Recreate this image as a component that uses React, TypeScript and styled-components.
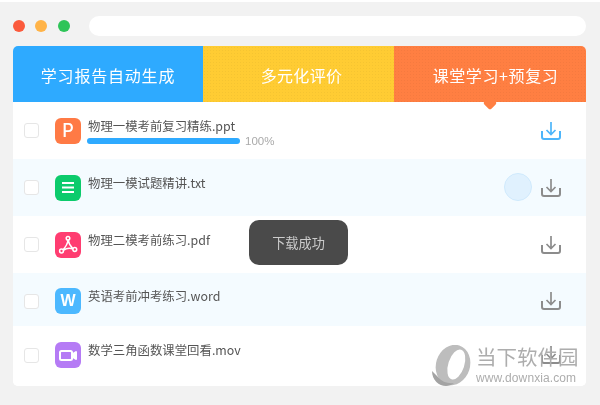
import React from "react";
import styled, { createGlobalStyle } from "styled-components";

const Global = createGlobalStyle`
  html, body { margin: 0; padding: 0; background: #fff; }
  * { box-sizing: border-box; }
`;

const Page = styled.div`
  width: 600px;
  height: 405px;
  overflow: hidden;
  border-top: 2px solid #fff;
  background: #f2f2f2;
  padding: 14px 14px 0 13px;
  font-family: "Noto Sans CJK SC", "Noto Sans", sans-serif;
  filter: blur(0.35px);
`;

const TitleBar = styled.div`
  display: flex;
  align-items: center;
  height: 20px;
`;

const Light = styled.span<{ $color: string; $gap: number }>`
  width: 12px;
  height: 12px;
  border-radius: 50%;
  background: ${(p) => p.$color};
  margin-right: ${(p) => p.$gap}px;
`;

const AddressBar = styled.div`
  flex: 1;
  height: 20px;
  border-radius: 10px;
  background: #fff;
`;

const Card = styled.div`
  position: relative;
  margin-top: 10px;
  height: 340px;
  background: #fff;
  border-radius: 5px;
  overflow: hidden;
`;

const Tabs = styled.div`
  display: grid;
  grid-template-columns: 190px 191px 192px;
  height: 56px;
`;

const Tab = styled.div<{ $bg: string; $dotted?: boolean; $shift: number; $spacing: number }>`
  display: flex;
  align-items: center;
  justify-content: center;
  padding: 2px 0 0 ${(p) => p.$shift}px;
  color: #fff;
  background-color: ${(p) => p.$bg};
  background-image: ${(p) =>
    p.$dotted ? "radial-gradient(rgba(0,0,0,0.04) 0.8px, transparent 1px)" : "none"};
  background-size: 3px 3px;
  font-size: 16px;
  letter-spacing: ${(p) => p.$spacing}px;
`;

const Pointer = styled.span`
  position: absolute;
  z-index: 1;
  left: 472px;
  top: 52px;
  width: 10px;
  height: 10px;
  background: #ff7f42;
  border-radius: 2px;
  transform: rotate(45deg);
`;

const Row = styled.div<{ $h: number; $tint?: boolean; $top?: number; $bottom?: number }>`
  position: relative;
  display: flex;
  align-items: center;
  height: ${(p) => p.$h}px;
  padding: ${(p) => p.$top ?? 0}px 25px ${(p) => p.$bottom ?? 0}px 11px;
  background: ${(p) => (p.$tint ? "#f4fbff" : "#fff")};
`;

const Check = styled.span`
  width: 15px;
  height: 15px;
  flex: none;
  border: 1.5px solid #e6e6e6;
  border-radius: 3px;
  background: #fff;
  margin-right: 16px;
`;

const FileIcon = styled.span<{ $bg: string }>`
  width: 26px;
  height: 26px;
  flex: none;
  display: flex;
  align-items: center;
  justify-content: center;
  border-radius: 6px;
  background: ${(p) => p.$bg};
  color: #fff;
  font-family: "Inter", "Liberation Sans", sans-serif;
  font-weight: 500;
  font-size: 18px;
  margin-right: 7px;
`;

const BoldLetter = styled.span`
  font-family: "Liberation Sans", sans-serif;
  font-weight: 700;
  font-size: 16px;
`;

const Info = styled.div`
  height: 26px;
  display: flex;
  flex-direction: column;
  gap: 3px;
`;

const Name = styled.div`
  font-size: 12.4px;
  line-height: 18px;
  height: 18px;
  margin-top: -1px;
  color: #555;
  white-space: nowrap;
`;

const ProgressLine = styled.div`
  display: flex;
  align-items: center;
  height: 6px;
  margin-left: -1px;
`;

const Bar = styled.div`
  width: 153px;
  height: 6px;
  border-radius: 3px;
  background: #2eaaff;
`;

const Percent = styled.span`
  margin-left: 5px;
  font-family: "Liberation Sans", sans-serif;
  font-size: 11.5px;
  color: #aaa;
`;

const DownloadBtn = styled.span`
  margin-left: auto;
  display: flex;
`;

const Ripple = styled.span`
  position: absolute;
  left: 491px;
  top: 14px;
  width: 28px;
  height: 28px;
  border-radius: 50%;
  background: #e0f1fe;
  border: 1px solid #cfe9fc;
`;

const Toast = styled.div`
  position: absolute;
  left: 236px;
  top: 174px;
  width: 99px;
  height: 45px;
  display: flex;
  align-items: center;
  justify-content: center;
  border-radius: 10px;
  background: #4a4a4a;
  color: #ccc;
  font-size: 13.2px;
`;

const Watermark = styled.div`
  position: absolute;
  left: 418px;
  top: 299px;
  display: flex;
  align-items: flex-start;
  gap: 3px;
  color: #adadad;
`;

const WatermarkText = styled.div`
  display: flex;
  flex-direction: column;
  margin-top: -2px;
`;

const BrandName = styled.div`
  font-size: 20.5px;
  line-height: 26px;
  white-space: nowrap;
`;

const BrandUrl = styled.div`
  font-family: "Liberation Sans", sans-serif;
  font-size: 12px;
  line-height: 14px;
  margin-top: 2px;
  letter-spacing: 0.1px;
  white-space: nowrap;
`;

const DownloadIcon = ({ color }: { color: string }) => (
  <svg width="20" height="18" viewBox="0 0 20 18" fill="none" stroke={color} strokeWidth="1.7">
    <path d="M1 9v6a2 2 0 0 0 2 2h14a2 2 0 0 0 2-2V9" strokeWidth="2" />
    <path d="M10 0v12M5.5 8l4.5 4.5L14.5 8" />
  </svg>
);

const LinesGlyph = () => (
  <svg width="14" height="13" viewBox="0 0 14 13" stroke="#fff" strokeWidth="2">
    <path d="M1 2h12M1 6.500h12M1 11h12" />
  </svg>
);

const PdfGlyph = () => (
  <svg width="20" height="20" viewBox="0 0 20 20" fill="none" stroke="#fff" strokeWidth="1.5">
    <circle cx="10" cy="3.200" r="1.800" />
    <circle cx="3.500" cy="16" r="1.900" />
    <circle cx="16.800" cy="14.500" r="1.900" />
    <path d="M10 5 Q9.500 10 5 14.700M10.200 5 Q11 10 15 13.800M5.300 15.300 Q10 12 15 14" />
  </svg>
);

const VideoGlyph = () => (
  <svg width="18" height="13" viewBox="0 0 18 13" fill="none" stroke="#fff" strokeWidth="2" strokeLinejoin="round">
    <rect x="1" y="2" width="12" height="9" rx="1.500" />
    <path d="M13 5.500l4-2.500v7l-4-2.500z" fill="#fff" />
  </svg>
);

const Logo = () => (
  <svg width="42" height="42" viewBox="0 0 42 42">
    <g transform="rotate(18 22 20)">
      <ellipse cx="22" cy="20" rx="17" ry="20.500" fill="#bdbdbd" />
      <ellipse cx="25" cy="18.500" rx="8" ry="15.500" fill="#fff" />
    </g>
    <path d="M1 26c0 9 7 15 14 15 3 0 6-1 8-3-6 1-12-1-16-6-2-2-4-4-6-6z" fill="#a3a3a3" />
  </svg>
);

type FileRow = {
  name: string;
  bg: string;
  glyph: React.ReactNode;
  h: number;
  tint?: boolean;
  top?: number;
  bottom?: number;
};

const files: FileRow[] = [
  { name: "物理一模考前复习精练.ppt", bg: "#ff7a45", glyph: "P", h: 57 },
  { name: "物理一模试题精讲.txt", bg: "#0ccb6c", glyph: <LinesGlyph />, h: 57, tint: true },
  { name: "物理二模考前练习.pdf", bg: "#ff3d71", glyph: <PdfGlyph />, h: 57 },
  { name: "英语考前冲考练习.word", bg: "#4cb8ff", glyph: <BoldLetter>W</BoldLetter>, h: 53, tint: true, top: 3 },
  { name: "数学三角函数课堂回看.mov", bg: "#b57bf5", glyph: <VideoGlyph />, h: 60, bottom: 2 },
];

export default function App() {
  return (
    <Page>
      <Global />
      <TitleBar>
        <Light $color="#fb5a3c" $gap={10} />
        <Light $color="#ffb347" $gap={11} />
        <Light $color="#2ec458" $gap={19} />
        <AddressBar />
      </TitleBar>
      <Card>
        <Tabs>
          <Tab $bg="#2eaaff" $shift={0} $spacing={0.8}>学习报告自动生成</Tab>
          <Tab $bg="#ffcc33" $dotted $shift={6} $spacing={0.3}>多元化评价</Tab>
          <Tab $bg="#ff7f42" $dotted $shift={11} $spacing={0.6}>课堂学习+预复习</Tab>
        </Tabs>
        <Pointer />
        {files.map((f, i) => (
          <Row key={f.name} $h={f.h} $tint={f.tint} $top={f.top} $bottom={f.bottom}>
            <Check />
            <FileIcon $bg={f.bg}>{f.glyph}</FileIcon>
            <Info>
              <Name>{f.name}</Name>
              {i === 0 && (
                <ProgressLine>
                  <Bar />
                  <Percent>100%</Percent>
                </ProgressLine>
              )}
            </Info>
            {i === 1 && <Ripple />}
            <DownloadBtn>
              <DownloadIcon color={i === 0 ? "#4db5fa" : "#8c8c8c"} />
            </DownloadBtn>
          </Row>
        ))}
        <Toast>下载成功</Toast>
        <Watermark>
          <Logo />
          <WatermarkText>
            <BrandName>当下软件园</BrandName>
            <BrandUrl>www.downxia.com</BrandUrl>
          </WatermarkText>
        </Watermark>
      </Card>
    </Page>
  );
}
